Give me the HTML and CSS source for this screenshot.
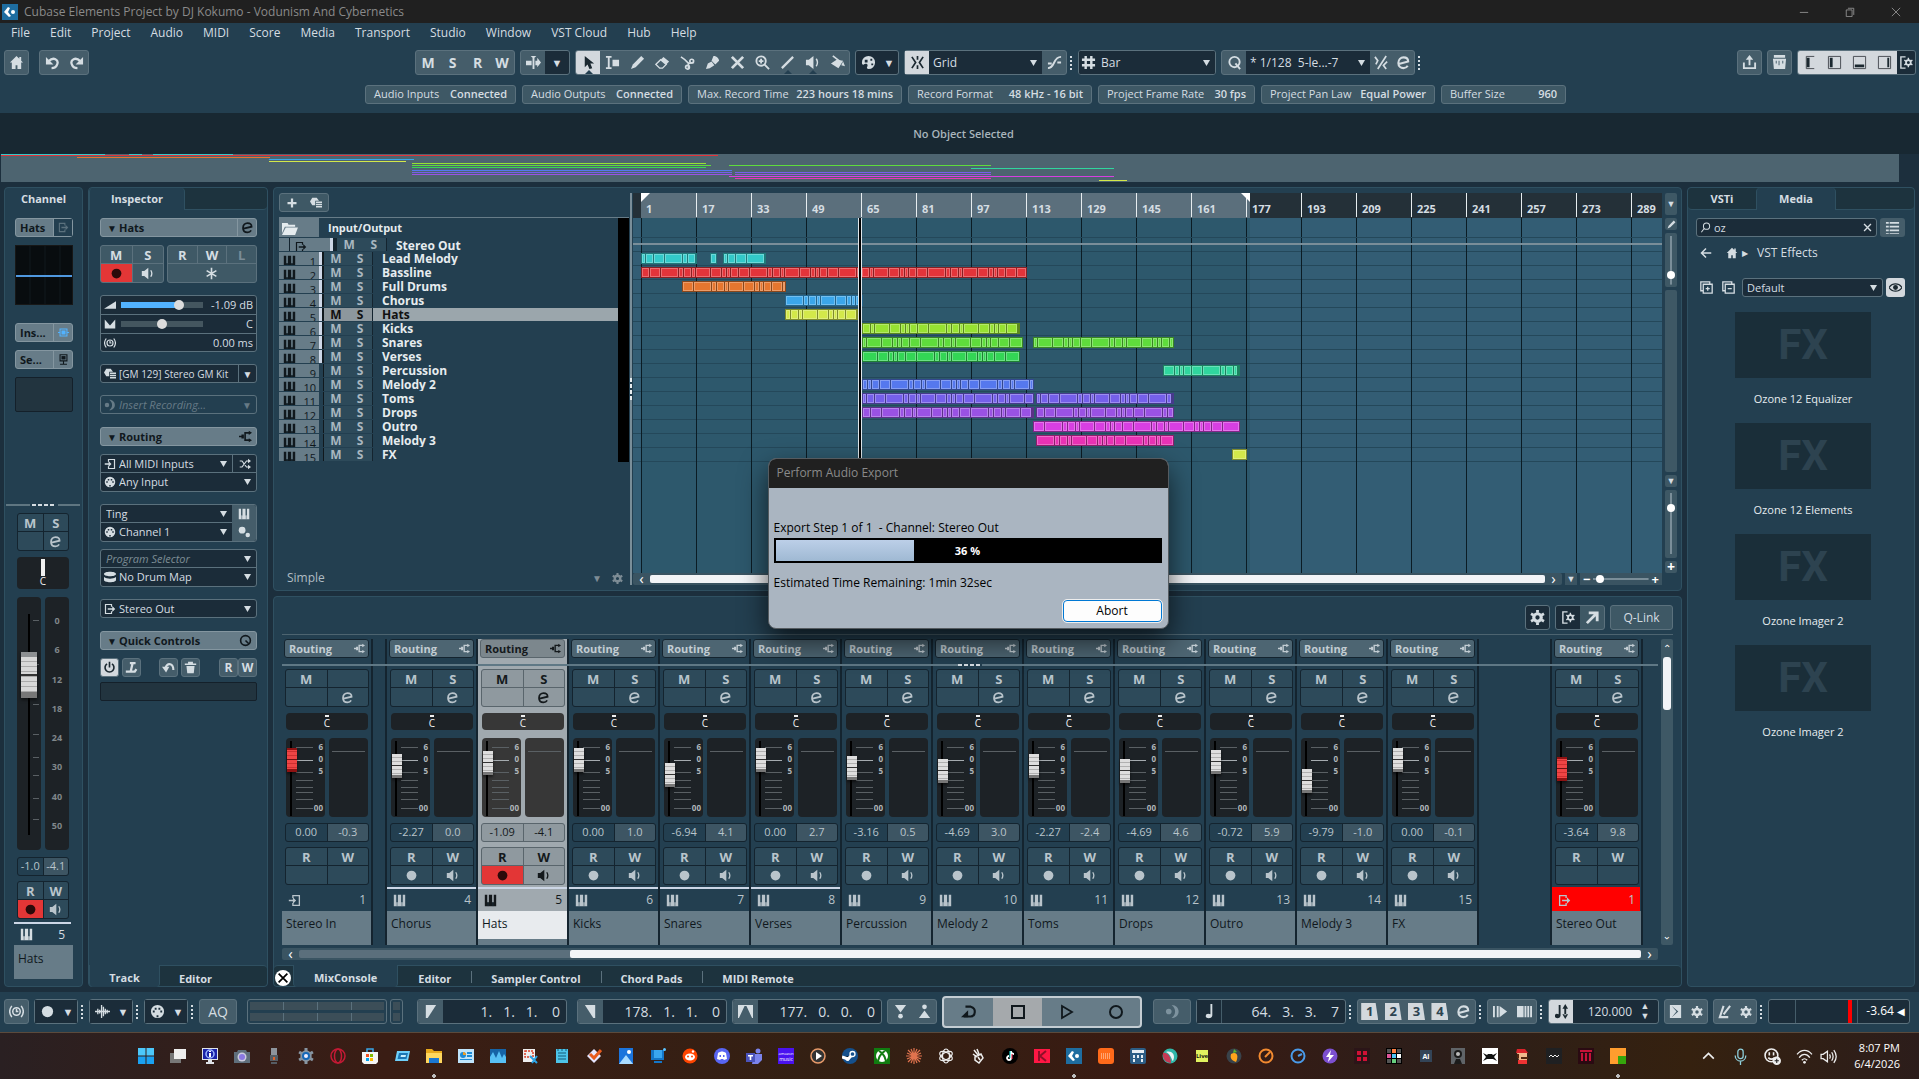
FILE: index.html
```html
<!DOCTYPE html>
<html lang="en">
<head>
<meta charset="utf-8">
<title>Cubase Elements Project by DJ Kokumo - Vodunism And Cybernetics</title>
<link rel="stylesheet" href="styles.css">
</head>
<body>
<svg class="sprite" aria-hidden="true">
  <symbol id="home" viewBox="0 0 16 16"><path fill="currentColor" d="M8 1 1 8h2v7h4v-4h2v4h4V8h2l-2-2V2h-2v2z"/></symbol>
  <symbol id="undo" viewBox="0 0 16 16"><path fill="none" stroke="currentColor" stroke-width="2.4" d="M4 6.500C9 1.500 15 5 13 10c-1 3-3 4-6 4"/><path fill="currentColor" d="M1 2v8h8z"/></symbol>
  <symbol id="redo" viewBox="0 0 16 16"><path fill="none" stroke="currentColor" stroke-width="2.400" d="M12 6.500C7 1.500 1 5 3 10c1 3 3 4 6 4"/><path fill="currentColor" d="M15 2v8H7z"/></symbol>
  <symbol id="autoscroll" viewBox="0 0 16 16"><path fill="currentColor" d="M0 6h6v5H0zM5 1h6L8 4zM7 3h2v12H7zM10 6h2V3l4 5-4 5v-2h-2z"/></symbol>
  <symbol id="arrow" viewBox="0 0 16 16"><path fill="currentColor" d="M4 1v12l3-3 2 5 3-1-2-5h4z"/></symbol>
  <symbol id="range" viewBox="0 0 16 16"><path fill="currentColor" d="M1 1h6v2H5v10h2v2H1v-2h2V3H1zM8 5h7v7H8z"/></symbol>
  <symbol id="pencil" viewBox="0 0 16 16"><path fill="currentColor" d="m12 1 3 3-9 9-5 2 2-5z"/></symbol>
  <symbol id="eraser" viewBox="0 0 16 16"><path fill="currentColor" d="m9 2 6 5-3 3-6-5z"/><path fill="none" stroke="currentColor" stroke-width="1.500" d="m6 5-5 5 4 4h3l4-4z"/></symbol>
  <symbol id="scissors" viewBox="0 0 16 16"><g fill="none" stroke="currentColor" stroke-width="1.800"><path d="M1 2c5 3 6 5 8 7M9 14V9l6-1"/><circle cx="12.500" cy="6.500" r="2"/><circle cx="8" cy="13" r="2"/></g></symbol>
  <symbol id="glue" viewBox="0 0 16 16"><path fill="currentColor" d="M9 1c4 0 6 3 6 5l-4 4-4-4zM7 7l3 4-5 3-4 1 2-6z"/></symbol>
  <symbol id="mute" viewBox="0 0 16 16"><path stroke="currentColor" stroke-width="3" d="m2 2 12 12M14 2 2 14"/></symbol>
  <symbol id="zoom" viewBox="0 0 16 16"><g fill="none" stroke="currentColor" stroke-width="2"><circle cx="6.500" cy="6.500" r="5"/><path d="m10 10 5 5M4 6.500h5M6.500 4v5"/></g></symbol>
  <symbol id="line" viewBox="0 0 16 16"><path stroke="currentColor" stroke-width="2.400" d="M14 2 2 14"/></symbol>
  <symbol id="speaker" viewBox="0 0 16 16"><path fill="currentColor" d="M1 5h3l5-4v14l-5-4H1z"/><path fill="none" stroke="currentColor" stroke-width="1.600" d="M12 4c2 3 2 5 0 8"/></symbol>
  <symbol id="bucket" viewBox="0 0 16 16"><path fill="currentColor" d="m1 9 6-4 7 1-5 8zM14 7l2 5-4-1z"/><path fill="none" stroke="currentColor" stroke-width="1.800" d="m3 1 8 6"/></symbol>
  <symbol id="palette" viewBox="0 0 16 16"><path fill="currentColor" fill-rule="evenodd" d="M8 1a7 7 0 0 0-7 7c0 2 1 3 2 2 1-1 4-1 4 1s-2 3 1 4A7 7 0 0 0 8 1zM4 5h3v3H4zm6-1h2v2h-2zm1 5h2v2h-2z"/></symbol>
  <symbol id="snap" viewBox="0 0 16 16"><path fill="none" stroke="currentColor" stroke-width="1.800" d="M8 1v4M8 11v4M2 2l4 6-4 6M14 2l-4 6 4 6"/></symbol>
  <symbol id="curve" viewBox="0 0 16 16"><path fill="none" stroke="currentColor" stroke-width="2" d="M1 14c8 0 5-12 14-12M1 9h4M11 8h4"/></symbol>
  <symbol id="hash" viewBox="0 0 16 16"><path stroke="currentColor" stroke-width="2.600" d="M5 1v14M11 1v14M1 5h14M1 11h14"/></symbol>
  <symbol id="q" viewBox="0 0 16 16"><g fill="none" stroke="currentColor" stroke-width="2"><circle cx="8" cy="7.500" r="5.500"/><path d="m9 9 5 6"/></g></symbol>
  <symbol id="iq" viewBox="0 0 16 16"><path fill="none" stroke="currentColor" stroke-width="1.800" d="M1 2l3 4-2 4M13 1 4 15M14 7l-4 4 3 4"/></symbol>
  <symbol id="e" viewBox="0 0 16 16"><path fill="none" stroke="currentColor" stroke-width="2.200" d="M3 9.500 13 7C13 4 11 2.500 8 2.500S2.500 5 2.500 8.500 5 14 8 14c2 0 3.500-.8 4.500-2.500"/></symbol>
  <symbol id="export" viewBox="0 0 16 16"><path fill="currentColor" d="m8 0 4 5H9v6H7V5H4zM1 8h2v5h10V8h2v7H1z"/></symbol>
  <symbol id="mixer" viewBox="0 0 16 16"><path fill="currentColor" fill-rule="evenodd" d="M2 0h12v3H2zM1 4h14l-1 11H2zm3 2v3h1V6zm3 0v5h1V6zm4 0v3h1V6z"/></symbol>
  <symbol id="zl" viewBox="0 0 16 16"><path fill="none" stroke="#444a50" d="M12 1.500H3.500v13H12"/><path fill="#1b2830" d="M4 3h3v10H4z"/></symbol>
  <symbol id="zi" viewBox="0 0 16 16"><path fill="none" stroke="#444a50" d="M1.500 1.500h13v13h-13z"/><path fill="#1b2830" d="M3 3h3v10H3z"/></symbol>
  <symbol id="zb" viewBox="0 0 16 16"><path fill="none" stroke="#444a50" d="M1.500 1.500h13v13h-13z"/><path fill="#1b2830" d="M3 10h10v3H3z"/></symbol>
  <symbol id="zr" viewBox="0 0 16 16"><path fill="none" stroke="#444a50" d="M1.500 1.500h13v13h-13z"/><path fill="#1b2830" d="M11 3h2v10h-2z"/></symbol>
  <symbol id="gear" viewBox="0 0 16 16"><circle cx="8" cy="8" r="4" fill="none" stroke="currentColor" stroke-width="3.400"/><path stroke="currentColor" stroke-width="3" d="M8 0v3M8 13v3M1.100 4l2.600 1.500M12.300 10.500l2.600 1.500M1.100 12l2.600-1.500M12.300 5.500 14.900 4"/></symbol>
  <symbol id="setup" viewBox="0 0 16 16"><path fill="none" stroke="currentColor" stroke-width="1.500" d="M7 2H2v12h5"/><circle cx="10" cy="8" r="2.500" fill="none" stroke="currentColor" stroke-width="1.800"/><path stroke="currentColor" stroke-width="1.500" d="M10 3v3M10 10v3M5.700 5.500l2 1.200M12.300 9.300l2 1.200M5.700 10.500l2-1.200M12.300 6.700l2-1.200"/></symbol>
  <symbol id="popout" viewBox="0 0 16 16"><path fill="none" stroke="currentColor" stroke-width="3" d="M2 14 12 4M4 3h9v9"/></symbol>
  <symbol id="out" viewBox="0 0 16 16"><path fill="none" stroke="currentColor" stroke-width="1.600" d="M10 5V2H2v12h8v-3"/><path fill="currentColor" d="M5 7h6V4l4 4-4 4V9H5z"/></symbol>
  <symbol id="in" viewBox="0 0 16 16"><path fill="none" stroke="currentColor" stroke-width="1.600" d="M6 5V2h8v12H6v-3"/><path fill="currentColor" d="M1 7h5V4l4 4-4 4V9H1z"/></symbol>
  <symbol id="tkeys" viewBox="0 0 16 16"><path fill="currentColor" d="M1 1h3v9h2V1h4v9h2V1h3v14H1z"/><path stroke="#233f50" stroke-width="1" d="M5 10v5M11 10v5" opacity=".6"/></symbol>
  <symbol id="folder" viewBox="0 0 18 16"><path fill="currentColor" d="M1 2h6l1 2h7v2H4L1 13zM5 7h13l-3 8H1z"/></symbol>
  <symbol id="plus" viewBox="0 0 16 16"><path stroke="currentColor" stroke-width="3" d="M8 2v12M2 8h12"/></symbol>
  <symbol id="preset" viewBox="0 0 16 16"><path fill="currentColor" d="M3 1h6l3 4H7v6H3L0 6zM8 6h8v2H8zM8 9h8v2H8zM8 12h8v2H8z"/></symbol>
  <symbol id="dot" viewBox="0 0 16 16"><circle cx="8" cy="8" r="6" fill="currentColor"/></symbol>
  <symbol id="star" viewBox="0 0 16 16"><path stroke="currentColor" stroke-width="2" d="M8 1v14M2 4.500l12 7M2 11.500l12-7"/></symbol>
  <symbol id="vol" viewBox="0 0 16 16"><path fill="currentColor" d="M0 13 16 3v10z"/></symbol>
  <symbol id="pan" viewBox="0 0 16 16"><path fill="currentColor" d="M1 2l7 8 7-8v12H1z"/></symbol>
  <symbol id="delay" viewBox="0 0 16 16"><g fill="none" stroke="currentColor" stroke-width="1.600"><circle cx="8" cy="8" r="4"/><path d="M8 5v3h2M3 2C0 6 0 10 3 14M13 2c3 4 3 8 0 12"/></g></symbol>
  <symbol id="insrec" viewBox="0 0 16 16"><circle cx="4" cy="8" r="3" fill="currentColor"/><path fill="currentColor" d="M7 1c10 0 10 14 0 14 5-4 5-10 0-14z"/></symbol>
  <symbol id="routing" viewBox="0 0 16 16"><path fill="none" stroke="currentColor" stroke-width="2" d="M0 8h5M13 3.500H7.500v9H13"/><path fill="currentColor" d="M12 1l4 2.500L12 6zM12 10l4 2.500-4 2.500zM3 5.500h3v5H3z"/></symbol>
  <symbol id="shuffle" viewBox="0 0 16 16"><path fill="none" stroke="currentColor" stroke-width="1.600" d="M1 4h3l6 8h4M1 12h3l6-8h4"/><path fill="currentColor" d="M12 1l4 3-4 3zM12 9l4 3-4 3z"/></symbol>
  <symbol id="midi" viewBox="0 0 16 16"><path fill="currentColor" fill-rule="evenodd" d="M8 1a7 7 0 1 0 0 14A7 7 0 0 0 8 1zM3 7h2v2H3zm2-3h2v2H5zm4 0h2v2H9zm2 3h2v2h-2zm-4 5h2v2H7z"/></symbol>
  <symbol id="dots2" viewBox="0 0 16 16"><circle cx="5.500" cy="5.500" r="4.500" fill="currentColor"/><circle cx="13" cy="12" r="3" fill="currentColor"/></symbol>
  <symbol id="drum" viewBox="0 0 16 16"><path fill="currentColor" d="M0 4c0-4 16-4 16 0s-16 4-16 0zM0 8c4 3 12 3 16 0v4c0 4-16 4-16 0z"/></symbol>
  <symbol id="knob" viewBox="0 0 16 16"><g fill="none" stroke="currentColor" stroke-width="2"><circle cx="8" cy="8" r="6"/><path d="m8 8 4 4"/></g></symbol>
  <symbol id="power" viewBox="0 0 16 16"><path fill="none" stroke="currentColor" stroke-width="2" d="M8 1v7M5 3.500a5.500 5.500 0 1 0 6 0"/></symbol>
  <symbol id="learn" viewBox="0 0 16 16"><path fill="none" stroke="currentColor" stroke-width="2.800" d="M6 2.500h7M9.500 2 7 13M1 13h11l2-3"/></symbol>
  <symbol id="back" viewBox="0 0 16 16"><path fill="none" stroke="currentColor" stroke-width="2.600" d="M4 9c3-8 10-6 10 2"/><path fill="currentColor" d="M0 7h9l-4 7z"/></symbol>
  <symbol id="trash" viewBox="0 0 16 16"><path fill="currentColor" d="M1 3h4V1h6v2h4v2H1zM3 6h10l-1 9H4z"/></symbol>
  <symbol id="insert" viewBox="0 0 16 16"><path fill="none" stroke="#52b3ff" stroke-width="1.600" d="M3 3h10v10H3zM0 8h3M13 8h3"/><path fill="#52b3ff" d="M5 5h6v6H5z"/></symbol>
  <symbol id="send" viewBox="0 0 16 16"><path fill="none" stroke="currentColor" stroke-width="1.600" d="M3 1h10v9H3zM8 10v4M3 15h10"/><path fill="currentColor" d="M5 3h6v5H5z"/></symbol>
  <symbol id="search" viewBox="0 0 16 16"><g fill="none" stroke="currentColor" stroke-width="1.500"><circle cx="9.500" cy="6" r="4.500"/><path d="M6 9.500 2 15"/></g></symbol>
  <symbol id="x" viewBox="0 0 16 16"><path stroke="currentColor" stroke-width="2" d="m3 3 10 10M13 3 3 13"/></symbol>
  <symbol id="list" viewBox="0 0 16 16"><path fill="currentColor" d="M1 2h3v2H1zM5 2h10v2H5zM1 6h3v2H1zM5 6h10v2H5zM1 10h3v2H1zM5 10h10v2H5zM1 14h3v1H1zM5 14h10v1H5z"/></symbol>
  <symbol id="larrow" viewBox="0 0 16 16"><path fill="none" stroke="currentColor" stroke-width="2" d="M15 8H3M8 2 2 8l6 6"/></symbol>
  <symbol id="box" viewBox="0 0 16 16"><path fill="none" stroke="currentColor" stroke-width="1.600" d="M4 4h11v11H4zM12 4V1H1v11h3M7 9.500h5M9.500 7v5"/></symbol>
  <symbol id="boxm" viewBox="0 0 16 16"><path fill="none" stroke="currentColor" stroke-width="1.600" d="M4 4h11v11H4zM12 4V1H1v11h3M7 9.500h5"/></symbol>
  <symbol id="eye" viewBox="0 0 16 16"><path fill="none" stroke="currentColor" stroke-width="1.600" d="M0 8c4-6 12-6 16 0-4 6-12 6-16 0z"/><circle cx="8" cy="8" r="3" fill="currentColor"/></symbol>
  <symbol id="wave" viewBox="0 0 16 16"><path stroke="currentColor" stroke-width="1.400" d="M0 8h16M3 5v6M5 6v4M7 1v14M9 3v10M11 5v6M13 6v4"/></symbol>
  <symbol id="loc-l" viewBox="0 0 16 16"><path fill="currentColor" d="M3 1h11L5 15H3z"/></symbol>
  <symbol id="loc-r" viewBox="0 0 16 16"><path fill="currentColor" d="M2 1h11v14h-2z"/></symbol>
  <symbol id="loc-lr" viewBox="0 0 16 16"><path fill="currentColor" fill-rule="evenodd" d="M0 1h16v14h-1L9 2H7L1 15H0z"/></symbol>
  <symbol id="punch-in" viewBox="0 0 16 16"><path fill="currentColor" d="M2 1h12L8 9z"/><circle cx="8" cy="13" r="2.500" fill="currentColor"/></symbol>
  <symbol id="punch-out" viewBox="0 0 16 16"><path fill="currentColor" d="M2 15h12L8 7z"/><circle cx="8" cy="3" r="2.500" fill="currentColor"/></symbol>
  <symbol id="cycle" viewBox="0 0 18 16"><path fill="none" stroke="currentColor" stroke-width="2.400" d="M5 2h6c7 2 5 11 0 11H3"/><path fill="currentColor" d="M0 14 8 6v8z"/></symbol>
  <symbol id="stop" viewBox="0 0 16 16"><path fill="none" stroke="currentColor" stroke-width="2" d="M2 2h12v12H2z"/></symbol>
  <symbol id="play" viewBox="0 0 16 16"><path fill="none" stroke="currentColor" stroke-width="1.800" d="m3 2 10 6-10 6z"/></symbol>
  <symbol id="rec" viewBox="0 0 16 16"><circle cx="8" cy="8" r="6" fill="none" stroke="currentColor" stroke-width="2"/></symbol>
  <symbol id="note" viewBox="0 0 16 16"><path fill="currentColor" d="M9 0h2v12c0 4-7 4-7 1s3-3 5-2z"/></symbol>
  <symbol id="preroll" viewBox="0 0 16 16"><path fill="currentColor" d="M0 2h2v12H0zM4 2h2v12H4zM7 2l8 6-8 6z"/></symbol>
  <symbol id="postroll" viewBox="0 0 16 16"><path fill="currentColor" d="M0 2h7v12H0zM8 2h2v12H8zM11 2h2v12h-2zM14 2h2v12h-2z"/></symbol>
  <symbol id="tempo" viewBox="0 0 16 16"><path fill="currentColor" d="M5 1h2v11c0 4-6 4-6 1s2-3 4-2zM12 0l3 5H9zM11 4h2v8h-2zM12 16l3-5H9z"/></symbol>
  <symbol id="sync" viewBox="0 0 16 16"><path fill="currentColor" fill-rule="evenodd" d="M2 1h12v14H2zm2 1 5 6-5 6 7-6z"/></symbol>
  <symbol id="click" viewBox="0 0 16 16"><path fill="none" stroke="currentColor" stroke-width="2.200" d="M7 2 3 14h9M7 11l7-9"/></symbol>
</svg>

<header class="titlebar">
  <svg class="logo" viewBox="0 0 16 16"><path fill="#1e6da0" d="M0 0h16v16H0z"/><path fill="#fff" d="M6 3l2 1-2 4 3 4-2 1-5-5z"/><circle cx="11" cy="8" r="2" fill="#fff"/></svg>
  <span>Cubase Elements Project by DJ Kokumo - Vodunism And Cybernetics</span>
  <div class="winbtns">
    <button aria-label="Minimise"><svg viewBox="0 0 12 12"><path stroke="#999" d="M1 6.500h10"/></svg></button>
    <button aria-label="Restore"><svg viewBox="0 0 12 12"><path fill="none" stroke="#999" d="M1.500 3.500h7v8h-7zM3.500 1.500h7v8"/></svg></button>
    <button aria-label="Close"><svg viewBox="0 0 12 12"><path stroke="#999" d="m1 1 10 10M11 1 1 11"/></svg></button>
  </div>
</header>

<nav class="menubar">
  <a href="#">File</a><a href="#">Edit</a><a href="#">Project</a><a href="#">Audio</a><a href="#">MIDI</a><a href="#">Score</a><a href="#">Media</a><a href="#">Transport</a><a href="#">Studio</a><a href="#">Window</a><a href="#">VST Cloud</a><a href="#">Hub</a><a href="#">Help</a>
</nav>

<div class="toolbar">
  <div class="tool-left">
    <div class="grp"><button aria-label="Home"><svg><use href="#home"/></svg></button></div>
    <div class="grp"><button aria-label="Undo"><svg><use href="#undo"/></svg></button><button aria-label="Redo"><svg><use href="#redo"/></svg></button></div>
  </div>
  <div class="grp letters"><button>M</button><button>S</button><button>R</button><button>W</button></div>
  <div class="grp"><button aria-label="Auto-scroll"><svg><use href="#autoscroll"/></svg></button><button class="dark" aria-label="Auto-scroll options">▼</button></div>
  <div class="grp">
    <button class="on notch" aria-label="Select"><svg><use href="#arrow"/></svg></button><button aria-label="Range"><svg><use href="#range"/></svg></button><button aria-label="Draw"><svg><use href="#pencil"/></svg></button><button aria-label="Erase"><svg><use href="#eraser"/></svg></button><button aria-label="Split"><svg><use href="#scissors"/></svg></button><button aria-label="Glue"><svg><use href="#glue"/></svg></button><button aria-label="Mute"><svg><use href="#mute"/></svg></button><button aria-label="Zoom"><svg><use href="#zoom"/></svg></button><button class="notch" aria-label="Line"><svg><use href="#line"/></svg></button><button class="notch" aria-label="Play tool"><svg><use href="#speaker"/></svg></button><button aria-label="Colour"><svg><use href="#bucket"/></svg></button>
  </div>
  <div class="grp"><button class="dark" aria-label="Colours"><svg><use href="#palette"/></svg></button><button class="dark slim" aria-label="Colour menu">▼</button></div>
  <div class="grp more"><button class="on" aria-label="Snap"><svg><use href="#snap"/></svg></button><select class="sel-grid" aria-label="Snap type"><option>Grid</option></select><button aria-label="Curve"><svg><use href="#curve"/></svg></button></div>
  <div class="grp dark"><button class="dark slim" aria-label="Grid type"><svg><use href="#hash"/></svg></button><select class="sel-bar" aria-label="Grid type value"><option>Bar</option></select></div>
  <div class="grp more"><button aria-label="Quantize"><svg><use href="#q"/></svg></button><select class="sel-q" aria-label="Quantize preset"><option>* 1/128&nbsp; 5-le...-7</option></select><button class="slim" aria-label="Iterative"><svg><use href="#iq"/></svg></button><button class="slim" aria-label="Quantize panel"><svg><use href="#e"/></svg></button></div>
  <div class="tool-right">
    <div class="grp"><button aria-label="Export"><svg><use href="#export"/></svg></button></div>
    <div class="grp"><button aria-label="MixConsole"><svg><use href="#mixer"/></svg></button></div>
    <div class="grp"><button class="on" aria-label="Left zone"><svg><use href="#zl"/></svg></button><button class="on" aria-label="Inspector"><svg><use href="#zi"/></svg></button><button class="on" aria-label="Lower zone"><svg><use href="#zb"/></svg></button><button class="on" aria-label="Right zone"><svg><use href="#zr"/></svg></button><button class="dark slim" aria-label="Setup"><svg><use href="#setup"/></svg></button></div>
  </div>
</div>

<div class="infoline">
  <div class="chip c1"><span>Audio Inputs</span><b>Connected</b></div>
  <div class="chip c2"><span>Audio Outputs</span><b>Connected</b></div>
  <div class="chip c3"><span>Max. Record Time</span><b>223 hours 18 mins</b></div>
  <div class="chip c4"><span>Record Format</span><b>48 kHz - 16 bit</b></div>
  <div class="chip c5"><span>Project Frame Rate</span><b>30 fps</b></div>
  <div class="chip c6"><span>Project Pan Law</span><b>Equal Power</b></div>
  <div class="chip c7"><span>Buffer Size</span><b>960</b></div>
</div>

<div class="status">No Object Selected</div>
<div class="overview" id="overview"></div>

<main class="main">
  <section class="panel channel">
    <h2>Channel</h2>
    <div class="ch-body">
      <div class="headbtn"><button class="grow">Hats</button><button class="ghost" aria-label="Output"><svg><use href="#out"/></svg></button></div>
      <div class="eq"></div>
      <div class="headbtn"><button class="grow">Ins...</button><button aria-label="Inserts"><svg><use href="#insert"/></svg></button></div>
      <div class="headbtn sends"><button class="grow">Se...</button><button aria-label="Sends"><svg><use href="#send"/></svg></button></div>
      <div class="slot"></div>
    </div>
    <div class="splitter"></div>
    <div class="ch-strip">
      <div class="cells"><button>M</button><button>S</button><button aria-label="Empty"></button><button aria-label="Edit"><svg><use href="#e"/></svg></button></div>
      <div class="bigpan"><i></i>C</div>
      <div class="bigfader">
        <div class="fbox"><div class="ticks"></div><input class="vslider" type="range" min="0" max="207" value="152" aria-label="Hats volume"></div>
        <div class="meter"><span>0</span><span>6</span><span>12</span><span>18</span><span>24</span><span>30</span><span>40</span><span>50</span></div>
      </div>
      <div class="cells vals"><span>-1.0</span><span>-4.1</span></div>
      <div class="cells"><button>R</button><button>W</button><button class="rec" aria-label="Record"><svg><use href="#dot"/></svg></button><button aria-label="Monitor"><svg><use href="#speaker"/></svg></button></div>
      <div class="ch-num"><svg><use href="#tkeys"/></svg><span>5</span></div>
      <div class="ch-name">Hats</div>
    </div>
  </section>

  <section class="panel inspector">
    <div class="tabs top"><button class="tab active">Inspector</button></div>
    <div class="insp-body">
      <div class="headbtn"><button class="grow"><i>▼</i>Hats</button><button aria-label="Edit"><svg><use href="#e"/></svg></button></div>
      <div class="insp-btns">
        <div class="cells lite"><button>M</button><button>S</button><button class="rec" aria-label="Record"><svg><use href="#dot"/></svg></button><button aria-label="Monitor"><svg><use href="#speaker"/></svg></button></div>
        <div class="cells lite three"><button>R</button><button>W</button><button class="dim">L</button><button class="wide" aria-label="Freeze"><svg><use href="#star"/></svg></button></div>
      </div>
      <div class="field values">
        <div class="row"><svg><use href="#vol"/></svg><input class="hslider vol" type="range" min="0" max="100" value="73" aria-label="Volume"><output>-1.09 dB</output></div>
        <div class="row"><svg><use href="#pan"/></svg><input class="hslider" type="range" min="0" max="100" value="50" aria-label="Pan"><output>C</output></div>
        <div class="row"><svg><use href="#delay"/></svg><output>0.00 ms</output></div>
      </div>
      <div class="field gm"><div class="row"><svg><use href="#preset"/></svg><span class="grow">[GM 129] Stereo GM Kit</span><button class="cut" aria-label="Program menu">▼</button></div></div>
      <div class="field faint"><div class="row"><svg><use href="#insrec"/></svg><em class="grow">Insert Recording...</em><button aria-label="Insert recording menu">▼</button></div></div>
      <div class="headbtn sec"><button class="grow"><i>▼</i>Routing<svg><use href="#routing"/></svg></button></div>
      <div class="field">
        <div class="row"><svg><use href="#in"/></svg><select aria-label="MIDI input"><option>All MIDI Inputs</option></select><button class="cut" aria-label="Transform"><svg><use href="#shuffle"/></svg></button></div>
        <div class="row"><svg><use href="#midi"/></svg><select aria-label="Input channel"><option>Any Input</option></select></div>
      </div>
      <div class="field inst">
        <div class="row"><select class="flush" aria-label="Instrument"><option>Ting</option></select><button class="fill" aria-label="Keyboard"><svg><use href="#tkeys"/></svg></button></div>
        <div class="row"><svg><use href="#midi"/></svg><select aria-label="MIDI channel"><option>Channel 1</option></select><button class="fill" aria-label="Output settings"><svg><use href="#dots2"/></svg></button></div>
      </div>
      <div class="field prog">
        <div class="row"><select class="flush hint" aria-label="Program"><option>Program Selector</option></select></div>
        <div class="row"><svg><use href="#drum"/></svg><select aria-label="Drum map"><option>No Drum Map</option></select></div>
      </div>
      <div class="field"><div class="row"><svg><use href="#out"/></svg><select aria-label="Output"><option>Stereo Out</option></select></div></div>
      <div class="headbtn sec"><button class="grow"><i>▼</i>Quick Controls<svg><use href="#knob"/></svg></button></div>
      <div class="qc">
        <button class="on" aria-label="Power"><svg><use href="#power"/></svg></button><button aria-label="Learn"><svg><use href="#learn"/></svg></button>
        <button class="apart" aria-label="Revert"><svg><use href="#back"/></svg></button><button aria-label="Clear"><svg><use href="#trash"/></svg></button>
        <div class="rw"><button>R</button><button>W</button></div>
      </div>
      <div class="slot"></div>
    </div>
    <div class="tabs bottom"><button class="tab active">Track</button><button class="tab">Editor</button></div>
  </section>

  <div class="center">
    <section class="panel project">
      <div class="tracks">
        <div class="addbar"><button aria-label="Add track"><svg><use href="#plus"/></svg></button><button aria-label="Track presets"><svg><use href="#preset"/></svg></button></div>
        <div class="tracklist" id="tracklist">
          <div class="trk io"><div class="hd"><svg><use href="#folder"/></svg></div><div class="nm">Input/Output</div><div class="mt"></div></div>
          <div class="trk so"><div class="hd"></div><div class="hd2"><svg><use href="#out"/></svg></div><div class="ms"><button>M</button><button>S</button></div><div class="nm">Stereo Out</div><div class="mt"></div></div>
        </div>
        <div class="simple"><span>Simple</span><small>▼</small><svg><use href="#gear"/></svg></div>
      </div>
      <div class="divider"></div>
      <div class="arrange">
        <div class="ruler" id="ruler"></div>
        <div class="grid" id="grid"></div>
        <div class="hbar"><div class="sb"><button aria-label="Scroll left">‹</button><div class="rail"><div class="thumb"></div></div><button aria-label="Scroll right">›</button></div><button class="mini" aria-label="Zoom presets">▼</button><div class="zoomer"><b>−</b><input type="range" class="zslider" min="0" max="100" value="6" aria-label="Horizontal zoom"><b>+</b></div></div>
      </div>
      <div class="vtools">
        <button class="vt1" aria-label="Ruler menu">▼</button>
        <button class="vt2" aria-label="Draw"><svg><use href="#pencil"/></svg></button>
        <div class="vz"><i></i></div>
        <div class="vscroll"></div>
        <button class="vt2" aria-label="Vertical zoom presets">▼</button>
        <div class="vz low"><i></i></div>
        <b class="vplus">+</b>
      </div>
    </section>

    <section class="panel mix">
      <div class="mixtop">
        <button class="dark" aria-label="Settings"><svg><use href="#gear"/></svg></button>
        <div class="pair"><button class="dark" aria-label="Setup layout"><svg><use href="#setup"/></svg></button><button aria-label="Open in window"><svg><use href="#popout"/></svg></button></div>
        <button class="qlink">Q-Link</button>
      </div>
      <div class="mixbody">
        <div class="mixmain">
          <div class="strips" id="strips"></div>
          <div class="sb"><button aria-label="Scroll left">‹</button><div class="rail mixrail"><div class="thumb"></div></div><button aria-label="Scroll right">›</button></div>
        </div>
        <div class="vsb"><button aria-label="Scroll up">⌃</button><div class="vthumb"></div><button class="down" aria-label="Scroll down">⌃</button></div>
      </div>
      <div class="tabs bottom lower"><button class="closer" aria-label="Close lower zone"><svg><use href="#x"/></svg></button><button class="tab active">MixConsole</button><button class="tab">Editor</button><button class="tab">Sampler Control</button><button class="tab">Chord Pads</button><button class="tab last">MIDI Remote</button></div>
    </section>
  </div>

  <section class="panel media">
    <div class="tabs top"><button class="tab">VSTi</button><button class="tab active">Media</button></div>
    <div class="media-body">
      <div class="searchrow"><label class="search"><svg><use href="#search"/></svg><input type="text" value="oz" aria-label="Search"><svg><use href="#x"/></svg></label><button aria-label="List view"><svg><use href="#list"/></svg></button></div>
      <div class="crumbs"><svg><use href="#larrow"/></svg><svg><use href="#home"/></svg><i>▶</i><a href="#">VST Effects</a></div>
      <div class="filter"><svg><use href="#box"/></svg><svg><use href="#boxm"/></svg><select aria-label="Attributes"><option>Default</option></select><button aria-label="Show"><svg><use href="#eye"/></svg></button></div>
      <figure><div class="fx">FX</div><figcaption>Ozone 12 Equalizer</figcaption></figure>
      <figure><div class="fx">FX</div><figcaption>Ozone 12 Elements</figcaption></figure>
      <figure><div class="fx">FX</div><figcaption>Ozone Imager 2</figcaption></figure>
      <figure><div class="fx">FX</div><figcaption>Ozone Imager 2</figcaption></figure>
    </div>
  </section>
</main>

<footer class="transport">
  <div class="grp"><button aria-label="Constrain delay"><svg><use href="#delay"/></svg></button></div>
  <div class="grp more dark t-menu"><button class="dark" aria-label="Record mode"><svg><use href="#dot"/></svg></button><button class="dark slim" aria-label="Record menu">▼</button></div>
  <div class="grp more dark t-menu"><button class="dark" aria-label="Audio record mode"><svg><use href="#wave"/></svg></button><button class="dark slim" aria-label="Audio menu">▼</button></div>
  <div class="grp more dark t-menu"><button class="dark" aria-label="MIDI record mode"><svg><use href="#midi"/></svg></button><button class="dark slim" aria-label="MIDI menu">▼</button></div>
  <div class="grp"><button class="aq">AQ</button></div>
  <div class="perf"><i></i><i></i></div><div class="perf tiny"><i></i><i></i></div>
  <div class="grp dark t-loc first"><button aria-label="Left locator"><svg><use href="#loc-l"/></svg></button><output>1. &nbsp; 1. &nbsp; 1. &nbsp; &nbsp;0</output></div>
  <div class="grp dark t-loc"><button aria-label="Right locator"><svg><use href="#loc-r"/></svg></button><output>178. &nbsp; 1. &nbsp; 1. &nbsp; &nbsp;0</output></div>
  <div class="grp dark t-loc near"><button aria-label="Locator range"><svg><use href="#loc-lr"/></svg></button><output>177. &nbsp; 0. &nbsp; 0. &nbsp; &nbsp;0</output></div>
  <div class="grp"><button aria-label="Punch in"><svg><use href="#punch-in"/></svg></button><button aria-label="Punch out"><svg><use href="#punch-out"/></svg></button></div>
  <div class="trans"><button aria-label="Cycle"><svg><use href="#cycle"/></svg></button><button class="lit" aria-label="Stop"><svg><use href="#stop"/></svg></button><button aria-label="Play"><svg><use href="#play"/></svg></button><button aria-label="Record"><svg><use href="#rec"/></svg></button></div>
  <div class="grp retro"><button class="faded" aria-label="Retrospective record"><svg><use href="#insrec"/></svg></button></div>
  <div class="grp dark t-loc more near"><button class="dark" aria-label="Time format"><svg><use href="#note"/></svg></button><output>64. &nbsp; 3. &nbsp; 3. &nbsp; &nbsp;7</output></div>
  <div class="grp more t-mark"><button><b>1</b></button><button><b>2</b></button><button><b>3</b></button><button><b>4</b></button><button aria-label="Markers"><svg><use href="#e"/></svg></button></div>
  <div class="grp more"><button aria-label="Preroll"><svg><use href="#preroll"/></svg></button><button aria-label="Postroll"><svg><use href="#postroll"/></svg></button></div>
  <div class="grp dark t-tempo"><button class="on" aria-label="Tempo track"><svg><use href="#tempo"/></svg></button><output>120.000</output><span class="spin"><i>▲</i><i>▼</i></span></div>
  <div class="grp near"><button class="slim" aria-label="Sync"><svg><use href="#sync"/></svg></button><button class="slim" aria-label="Sync setup"><svg class="sm"><use href="#gear"/></svg></button></div>
  <div class="grp more near"><button class="slim" aria-label="Click"><svg><use href="#click"/></svg></button><button class="slim" aria-label="Click setup"><svg class="sm"><use href="#gear"/></svg></button></div>
  <div class="grp dark t-level"><output>-3.64 <small>◀</small></output></div>
</footer>

<div class="taskbar">
  <div class="apps">
    <svg viewBox="0 0 16 16"><path fill="#4cc8fb" d="M0 0h7.500v7.500H0zM8.500 0H16v7.500H8.500z"/><path fill="#1aa1f1" d="M0 8.500h7.500V16H0zM8.500 8.500H16V16H8.500z"/></svg>
    <svg viewBox="0 0 16 16"><path fill="#777" d="M0 5h11v10H0z"/><path fill="#eee" d="M4 1h12v10H4z"/></svg>
    <svg viewBox="0 0 16 16"><path fill="#dfe3e8" d="M0 0h16v12H0zM6 12h4v2h2v2H4v-2h2z"/><path fill="#1a22a8" d="M1 1h14v10H1z"/><circle cx="8" cy="6" r="4" fill="none" stroke="#9bb5ff" stroke-width="1.500"/><path fill="#fff" d="M7 5h2v4H7zM7 3h2v1H7z"/></svg>
    <svg viewBox="0 0 16 16"><path fill="#5f6f7c" d="M0 4h3l1-2h8l1 2h3v11H0z"/><circle cx="8" cy="9" r="4.500" fill="#ccd"/><circle cx="8" cy="9" r="3" fill="#8a78e0"/></svg>
    <svg viewBox="0 0 16 16"><path fill="#8d949c" d="M5 0h6v8H5z"/><path fill="#555c63" d="M4 7h8v6H4zM5 14h6v2H5z"/><path fill="#e0632a" d="M7 9h2v3H7z"/></svg>
    <svg viewBox="0 0 16 16" color="#8795a2"><use href="#gear" width="16" height="16"/><circle cx="8" cy="8" r="4" fill="#1668b8"/><circle cx="8" cy="8" r="2" fill="#eef"/></svg>
    <svg viewBox="0 0 16 16"><circle cx="8" cy="8" r="7" fill="none" stroke="#c41a35" stroke-width="1.500"/><ellipse cx="8" cy="8" rx="3.500" ry="7" fill="none" stroke="#c41a35" stroke-width="1.500"/></svg>
    <svg viewBox="0 0 16 16"><path fill="#f4f4f4" d="M0 4h16v10l-2 2H2l-2-2z"/><path fill="none" stroke="#3aa6e8" stroke-width="1.500" d="M5 4V1h6v3"/><path fill="#f25022" d="M4 6h3v3H4z"/><path fill="#7fba00" d="M8 6h3v3H8z"/><path fill="#00a4ef" d="M4 10h3v3H4z"/><path fill="#ffb900" d="M8 10h3v3H8z"/></svg>
    <svg viewBox="0 0 16 16"><path fill="#6fd0fa" d="M3 3h13l-2 10H1z"/><path fill="#1b76b4" d="M5 5h9l-1.500 6H3.500z"/><path fill="#c6f0ff" d="M7 7h5l-.5 2h-5z"/></svg>
    <svg class="run" viewBox="0 0 16 16"><path fill="#e8a91c" d="M0 1h6l2 2h8v12H0z"/><path fill="#ffd75e" d="M0 5h16v10H0z"/><path fill="#1a77d2" d="M3 10h10v5H3z"/></svg>
    <svg viewBox="0 0 16 16"><path fill="#bfe4fb" d="M0 1h16v14H0z"/><circle cx="5" cy="7" r="3" fill="#1b8ad6"/><path fill="#1b8ad6" d="M9 4h5v2H9zM9 7h5v2H9zM2 11h12v1H2z"/><path fill="#f39c1f" d="M5 4a3 3 0 0 1 3 3H5z"/></svg>
    <svg viewBox="0 0 16 16"><path fill="#1663a6" d="M0 1h16v14H0z"/><path fill="#57c0f5" d="M0 9l3-5 3 6 3-7 3 7 2-4 2 3v6H0z"/></svg>
    <svg viewBox="0 0 16 16"><path fill="#eee" d="M1 1h12v13H1z"/><path fill="none" stroke="#d8402a" stroke-width="1.500" stroke-dasharray="2 1" d="M3 3h8v6H3z"/><path stroke="#2aa3e6" stroke-width="2" d="M8 8l7 7M15 8l-5 7"/></svg>
    <svg viewBox="0 0 16 16"><path fill="#4dc4e8" d="M2 1h12v14H2z"/><path stroke="#145b76" d="M4 5h8M4 8h8M4 11h8M4 1v2M8 1v2M12 1v2"/></svg>
    <svg viewBox="0 0 16 16"><path fill="#e6e6ff" d="M8 1l7 7-7 7-7-7z"/><path fill="none" stroke="#e85b1e" stroke-width="3" d="m4 6 4 4 7-8"/></svg>
    <svg viewBox="0 0 16 16"><path fill="#1b74dc" d="M1 0h14v16H1z"/><path fill="#a9dbff" d="M1 16 8 7l7 9z"/><circle cx="11" cy="4" r="2" fill="#fff"/></svg>
    <svg viewBox="0 0 16 16"><path fill="#1476c8" d="M1 2h13v10H1zM4 13h8v2H4z"/><path fill="#39a6f0" d="M4 2h8v8H4z"/><circle cx="14.500" cy="1.500" r="1.500" fill="#5cc4ff"/></svg>
    <svg viewBox="0 0 16 16"><circle cx="8" cy="8" r="7.500" fill="#ff4500"/><ellipse cx="8" cy="9" rx="5" ry="3.500" fill="#fff"/><circle cx="6" cy="8.500" r="1" fill="#ff4500"/><circle cx="10" cy="8.500" r="1" fill="#ff4500"/><circle cx="11" cy="3.500" r="1.200" fill="#fff"/></svg>
    <svg viewBox="0 0 16 16"><circle cx="8" cy="8" r="8" fill="#5865f2"/><path fill="#fff" d="M4 5c3-2 5-2 8 0l1 6-3 1-1-1H7l-1 1-3-1z"/><path fill="#5865f2" d="M5.500 7h1.500v2H5.500zM9 7h1.500v2H9z"/></svg>
    <svg viewBox="0 0 16 16"><circle cx="12" cy="3" r="2.500" fill="#7b83eb"/><path fill="#7b83eb" d="M8 6h8v6l-4 4H6z"/><path fill="#4b53bc" d="M0 5h9v9H0z"/><path fill="#fff" d="M2 7h5v1.500H5.300V12H3.700V8.500H2z"/></svg>
    <svg viewBox="0 0 16 16"><path fill="#4a12f0" d="M0 0h16v16H0z"/><text x="8" y="7" font-size="4" text-anchor="middle" fill="#fff" font-family="Open Sans">amazon</text><text x="8" y="13" font-size="5" text-anchor="middle" fill="#fff" font-family="Open Sans">music</text></svg>
    <svg viewBox="0 0 16 16"><circle cx="8" cy="8" r="7" fill="#333" stroke="#e79a6a" stroke-width="1.500"/><path fill="#fff" d="m6 4 6 4-6 4z"/></svg>
    <svg viewBox="0 0 16 16"><circle cx="8" cy="8" r="8" fill="#15508c"/><circle cx="10.500" cy="6" r="2.500" fill="none" stroke="#fff" stroke-width="1.300"/><path stroke="#fff" stroke-width="3" d="m0 9 6 2 3-3"/><circle cx="5.500" cy="11" r="2" fill="#fff"/></svg>
    <svg viewBox="0 0 16 16"><path fill="#107c10" d="M0 0h16v16H0z"/><circle cx="8" cy="8" r="6" fill="#fff"/><path stroke="#107c10" stroke-width="2" d="M4 13C5 9 7 6 8 5c1 1 3 4 4 8M5 3l3 2 3-2" fill="none"/></svg>
    <svg viewBox="0 0 16 16"><path stroke="#e0734e" stroke-width="1.200" d="M8 0v16M0 8h16M2 2l12 12M14 2 2 14M5 1l6 14M11 1 5 15M1 5l14 6M1 11l14-6"/></svg>
    <svg viewBox="0 0 16 16"><g fill="none" stroke="#eee" stroke-width="1.200"><ellipse cx="8" cy="8" rx="3.500" ry="7"/><ellipse cx="8" cy="8" rx="3.500" ry="7" transform="rotate(60 8 8)"/><ellipse cx="8" cy="8" rx="3.500" ry="7" transform="rotate(120 8 8)"/></g></svg>
    <svg viewBox="0 0 16 16"><path fill="none" stroke="#eee" stroke-width="1.500" d="M4 2l4 5M7 1l2 5M3 6l4 3M5 9l6-3 2 4-4 5-4-3zM8 9l2 3"/></svg>
    <svg viewBox="0 0 16 16"><circle cx="8" cy="8" r="8" fill="#000"/><path fill="none" stroke="#fff" stroke-width="1.800" d="M9 3v7a2 2 0 1 1-2-2M9 4c1 2 2 2 3 2"/><path fill="none" stroke="#25f4ee" d="M8 3v7"/><path fill="none" stroke="#fe2c55" d="M10 6v5"/></svg>
    <svg viewBox="0 0 16 16"><path fill="#ff1744" d="M0 1h16v14H0z"/><path stroke="#8f0f28" stroke-width="2" d="M5 3v10M12 3 6 8l6 5" fill="none"/></svg>
    <svg class="run" viewBox="0 0 16 16"><path fill="#1e6da0" d="M0 0h16v16H0z"/><path fill="#fff" d="M6 3l2 1-2 4 3 4-2 1-5-5z"/><circle cx="11" cy="8" r="2" fill="#fff"/></svg>
    <svg viewBox="0 0 16 16"><rect width="16" height="16" rx="3" fill="#ff6a1a"/><path stroke="#ffe0cc" stroke-dasharray="1 1" d="M3 6h10M3 8h10M3 10h10"/></svg>
    <svg viewBox="0 0 16 16"><rect width="16" height="16" rx="2" fill="#2c5d85"/><path fill="#e6edf3" d="M2 2h12v3H2zM3 7h2v3H3zM7 7h2v3H7zM11 7h2v3h-2zM3 11h2v3H3zM11 11h2v3h-2z"/></svg>
    <svg viewBox="0 0 16 16"><circle cx="8" cy="8" r="7.500" fill="#2fb6a8"/><path fill="#eef4f4" d="M4 4c6-2 10 3 7 9-1 0-2-7-7-9z"/><path fill="#c53a55" d="M1 5c4-1 8 3 8 10C4 15 0 11 1 5z"/></svg>
    <svg viewBox="0 0 16 16"><path fill="#e0f25f" d="M2 2h12v12H2z"/><text x="8" y="10" font-size="6" font-weight="700" text-anchor="middle" fill="#111" font-family="Open Sans">Live</text></svg>
    <svg viewBox="0 0 16 16"><circle cx="8" cy="8" r="7.500" fill="#39424a"/><path fill="#ffa41c" d="M5 6c6-3 8 2 5 8-5-2-6-4-5-8z"/><path fill="#5bb531" d="m7 5 1-4 3 3z"/></svg>
    <svg viewBox="0 0 16 16"><circle cx="8" cy="8" r="6.500" fill="none" stroke="#f28a30" stroke-width="2"/><path stroke="#f28a30" stroke-width="2" d="m7 9 5-5"/></svg>
    <svg viewBox="0 0 16 16"><circle cx="8" cy="8" r="6.500" fill="none" stroke="#4a9bea" stroke-width="2"/><path stroke="#4a9bea" stroke-width="2" d="m8 8 4-2"/></svg>
    <svg viewBox="0 0 16 16"><circle cx="8" cy="8" r="7.500" fill="#7c4fd0"/><path fill="#fff" d="M9 2 4 9h3l-1 5 6-7H8z"/></svg>
    <svg viewBox="0 0 16 16"><path fill="#2b1518" d="M0 0h16v16H0z"/><path fill="#d01035" d="M3 3h4v4H3zM9 3h4v4H9zM3 9h4v4H3zM9 9h4v4H9z"/></svg>
    <svg viewBox="0 0 16 16"><path fill="#000" d="M0 0h16v16H0z"/><path fill="#555" d="M1 1h4v4H1zM11 1h4v4h-4zM1 11h4v4H1zM11 11h4v4h-4z"/><path fill="#ff8044" d="M6 1h4v4H6z"/><path fill="#e0559a" d="M1 6h4v4H1z"/><path fill="#52c5f5" d="M6 6h4v4H6z"/><path fill="#fff" d="M11 6h4v4h-4z"/><path fill="#68cf7e" d="M6 11h4v4H6z"/></svg>
    <svg viewBox="0 0 16 16"><path fill="#334457" d="M2 2h12v12H2z"/><text x="8" y="11" font-size="7" font-weight="700" text-anchor="middle" fill="#fff" font-family="Open Sans">Ai</text></svg>
    <svg viewBox="0 0 16 16"><path fill="#606468" d="M1 0h14v16H1z"/><circle cx="8" cy="6" r="4" fill="#1b1b1b"/><circle cx="8" cy="6" r="2" fill="#bbb"/><path fill="#1b1b1b" d="M4 16l2-5h4l2 5z"/></svg>
    <svg viewBox="0 0 16 16"><path fill="#fff" d="M0 0h16v16H0z"/><path fill="#111" d="m1 5 4 2 1-1h4l1 1 4-2-3 4 3 4-4-2H5l-4 2 3-4z"/></svg>
    <svg viewBox="0 0 16 16"><path fill="#d9232a" d="M3 1h8l3 4H2z"/><path fill="#f0b98c" d="M3 5h10v7H5z"/><path fill="#54260f" d="M7 9h7v2H7zM3 6h2v4H3z"/><path fill="#e33" d="M4 12h9v4H4z"/></svg>
    <svg viewBox="0 0 16 16"><path fill="#1f2022" d="M0 0h16v16H0z"/><path fill="none" stroke="#eee" d="m3 9 2-2 2 2 2-2 2 2 2-2"/></svg>
    <svg viewBox="0 0 16 16"><path fill="#2a0a12" d="M0 0h16v16H0z"/><path fill="#c51238" d="M2 2h12v2H2zM3 5h2v8H3zM7 5h2v8H7zM11 5h2v8h-2z"/></svg>
    <svg class="run" viewBox="0 0 16 16"><path fill="#ff9d2e" d="M0 0h16v16H0z"/><path fill="#36a60c" d="M8 8h8v8H8z"/></svg>
  </div>
  <div class="tray">
    <svg viewBox="0 0 16 16"><path fill="none" stroke="#eee" stroke-width="1.500" d="m3 10 5-5 5 5"/></svg>
    <svg viewBox="0 0 16 16"><rect x="5.500" y="1" width="5" height="9" rx="2.500" fill="none" stroke="#8fd0dc" stroke-width="1.200"/><path fill="none" stroke="#8fd0dc" stroke-width="1.200" d="M3 7c0 7 10 7 10 0M8 13v3"/></svg>
    <svg viewBox="0 0 16 16"><circle cx="7" cy="7" r="6" fill="none" stroke="#eee" stroke-width="1.500"/><path stroke="#eee" stroke-width="1.500" fill="none" d="M5 4v3M9 4v3M4 9c2 2 4 2 6 0"/><circle cx="12" cy="12" r="4" fill="#eee"/><path stroke="#222" d="M12 10v4M10 12h4"/></svg>
    <svg viewBox="0 0 16 16"><path fill="none" stroke="#eee" stroke-width="1.300" d="M1 6c4-5 10-5 14 0M3 9c3-4 7-4 10 0M5.500 11.500c2-2 3-2 5 0"/><circle cx="8" cy="13.500" r="1.300" fill="#eee"/></svg>
    <svg viewBox="0 0 16 16"><path fill="none" stroke="#eee" stroke-width="1.200" d="M1 6h2l4-3v10l-4-3H1zM9 6c1 2 1 3 0 4M11 4c2 3 2 5 0 8M13 2c3 4 3 8 0 12"/></svg>
    <time>8:07 PM<br>6/4/2026</time>
  </div>
</div>

<div class="dialog" role="dialog" aria-label="Perform Audio Export">
  <div class="dlg-title">Perform Audio Export</div>
  <div class="dlg-body">
    <div>Export Step 1 of 1 &nbsp;- Channel: Stereo Out</div>
    <div class="progress"><div class="bar"></div><span>36 %</span></div>
    <div class="eta">Estimated Time Remaining: 1min 32sec</div>
    <button>Abort</button>
  </div>
</div>

<script src="script.js"></script>
</body>
</html>
```
FILE: styles.css
```css
* { box-sizing: border-box; }
body { margin: 0; min-height: 100vh; display: flex; flex-direction: column; background: #1c2f3d; color: #d5dde2; font: 11px/16px "Open Sans", "Noto Sans", sans-serif; overflow: hidden; }
button, input, select, output { font: inherit; color: inherit; }
button { border: 0; padding: 0; background: none; display: flex; align-items: center; justify-content: center; }
select { appearance: none; border: 0; border-radius: 0; outline: 0; padding: 0 20px 0 4px; min-width: 0; background: transparent url("data:image/svg+xml,%3Csvg xmlns='http://www.w3.org/2000/svg' width='8' height='8'%3E%3Cpath fill='%23d5dde2' d='M0 1h7L3.500 7z'/%3E%3C/svg%3E") no-repeat right 4px center; }
svg { width: 15px; height: 15px; flex: none; }
a { color: inherit; text-decoration: none; }
h2 { margin: 0; font-size: 11px; line-height: 22px; text-align: center; height: 23px; }
i { font-style: normal; }
.sprite { position: absolute; width: 0; height: 0; }
.grow { flex: 1; }

.titlebar { height: 23px; display: flex; align-items: center; gap: 6px; padding: 0 0 0 2px; background: #202020; color: #8a8a8a; font-size: 12px; }
.logo { width: 16px; height: 16px; }
.winbtns { margin-left: auto; display: flex; }
.winbtns button { width: 46px; }
.winbtns svg { width: 10px; height: 10px; }
.menubar { height: 20px; display: flex; align-items: center; gap: 20px; padding-left: 11px; background: #233f50; font-size: 12px; }

.toolbar { height: 39px; display: flex; align-items: center; gap: 5px; padding: 0 3px 0 4px; background: #233f50; }
.tool-left { display: flex; gap: 10px; width: 406px; }
.tool-right { display: flex; gap: 5px; margin-left: auto; }
.grp { position: relative; flex: none; display: flex; height: 25px; border: 1px solid #5b717d; border-radius: 3px; background: #455d6a; overflow: hidden; }
.grp > button { width: 25px; }
.grp > button:where(:first-child, :last-child) { width: 24px; }
.grp > button:where(:only-child) { width: 23px; }
.grp > button.slim { width: 18px; }
.grp > .sel-q ~ .slim { width: 22px; }
.grp .dark, .grp.dark, .grp select { background-color: #1b2c39; }
.grp .on { background: #d3d8dd; color: #1b2830; }
.grp.dark > button:first-child:not(.dark):not(.on) { background: #455d6a; }
.letters button { font-weight: 700; font-size: 14px; }
.notch { position: relative; }
.notch::after { content: ""; position: absolute; left: 9px; bottom: 0; width: 8px; height: 4px; background: #233f50; clip-path: polygon(50% 0, 100% 100%, 0 100%); }
.more { margin-right: 6px; overflow: visible; }
.more::after { content: ""; position: absolute; right: -6px; top: 5px; width: 2px; height: 14px; background: repeating-linear-gradient(#d5dde2 0 2px, transparent 2px 4px); }
.sel-grid { width: 113px; }
.sel-bar { width: 118px; }
.sel-q { width: 124px; }
.grp select { font-size: 12px; }

.infoline { height: 31px; display: flex; justify-content: center; gap: 6px; padding: 3px 0 0 12px; background: #233f50; }
.chip { height: 19px; display: flex; align-items: center; justify-content: space-between; padding: 0 8px 1px; border: 1px solid #5b717d; border-radius: 3px; background: #3e5865; white-space: nowrap; }
.chip b { font-weight: 600; }
.c1 { width: 151px; } .c2 { width: 160px; } .c3 { width: 214px; } .c4 { width: 184px; } .c5 { width: 157px; } .c6 { width: 174px; } .c7 { width: 125px; }
.status { height: 41px; display: flex; align-items: center; justify-content: center; padding-left: 8px; background: #182832; color: #a9b5bc; font-weight: 600; }
.overview { position: relative; height: 28px; margin: 0 20px 0 1px; background: #4d6470; }
.overview i { position: absolute; height: 1px; }

.main { flex: 1; display: grid; grid-template-columns: 79px 180px 1fr 228px; gap: 5px; padding: 5px 4px; }
.panel { display: flex; flex-direction: column; min-width: 0; background: #233f50; border: 1px solid #2f5061; border-radius: 4px; }
.tabs { display: flex; background: #1d333e; border-radius: 4px; }
.tab { height: 21px; font-weight: 700; color: #d5dde2; }
.tab.active { background: #233f50; border: 1px solid #2f5061; }
.top { border-bottom: 1px solid #2f5061; }
.top .active { border-width: 0 1px; border-radius: 4px 4px 0 0; margin-bottom: -1px; height: 22px; }
.bottom .tab { padding-top: 4px; }
.bottom .active { border-width: 0 1px; border-radius: 0 0 4px 4px; margin-top: -1px; height: 22px; }
.bottom { border-top: 1px solid #2f5061; height: 21px; }
.inspector .top .tab { width: 96px; }
.inspector .bottom .tab { width: 71px; }

.headbtn { display: flex; height: 19px; border: 1px solid #8496a0; border-radius: 3px; background: #677c88; color: #10181d; }
.headbtn .grow { justify-content: flex-start; padding-left: 4px; font-weight: 700; overflow: hidden; }
.headbtn button + button { width: 19px; border-left: 1px solid #8496a0; }
.headbtn svg { width: 13px; height: 13px; }
.headbtn .ghost { background: #233f50; color: #5b717d; }
.headbtn i { width: 14px; font-size: 10px; }
.slot { height: 19px; background: #22343f; border: 1px solid #14202a; border-radius: 2px; }

.ch-body { padding: 7px 9px 0 10px; display: flex; flex-direction: column; }
.ch-body .headbtn svg { width: 11px; height: 11px; }
.eq { height: 60px; margin: 8px 0 18px; border: 1px solid #171717; background: linear-gradient(#0000 29px, #4f98e0 29px 31px, #0000 31px), repeating-linear-gradient(90deg, #080c0f 0 13px, #0c1216 13px 15px); }
.sends { margin-top: 8px; }
.ch-body .slot { height: 35px; margin-top: 8px; }
.splitter { height: 2px; margin: auto 2px 0 1px; background: linear-gradient(90deg, #0000 24px, #233f50 24px 26px, #0000 26px 50px, #233f50 50px 52px, #0000 52px), repeating-linear-gradient(90deg, #d5dde2 0 4px, #233f50 4px 6px) 26px 0 / 24px 2px no-repeat, #5f7681; }
.ch-strip { padding: 7px 9px 7px; display: flex; flex-direction: column; }
.ch-strip > * { margin: 0 4px 0 3px; }

.cells { display: grid; grid-template-columns: 1fr 1fr; grid-auto-rows: 18px; grid-template-rows: 17px; gap: 1px; padding: 0; border: 1px solid #14242f; border-radius: 3px; background: #14242f; overflow: hidden; }
.cells > * { background: #2d4a5a; color: #b9c4cb; font-weight: 700; font-size: 13px; }
.cells svg { width: 13px; height: 13px; }
.cells .rec { background: #e33636; color: #2c0a0a; }
.cells.vals { height: 19px; }
.ch-strip .vals { margin-bottom: 5px; }
.cells.vals > * { font-weight: 400; font-size: 11px; text-align: center; line-height: 16px; }
.cells.vals > :first-child { background: #233f50; }
.cells.vals > :last-child { background: #3d5563; }
.cells.lite { background: #5b717d; border-color: #5b717d; }
.cells.lite > * { background: #3f5966; color: #d5dde2; }
.cells.lite .rec { background: #e33636; color: #2c0a0a; }
.cells.lite .dim { color: #7a8c97; }
.three { grid-template-columns: 1fr 1fr 1fr; }
.wide { grid-column: span 3; }

.bigpan { height: 32px; margin-top: 6px; margin-bottom: 8px; background: #1d2226; border-radius: 4px; text-align: center; color: #f0f0f0; line-height: 11px; font-size: 10px; overflow: hidden; }
.bigpan i { display: block; width: 4px; height: 17px; margin: 2px auto 0; background: #f0f0f0; }
.bigfader { display: flex; gap: 4px; height: 253px; margin-bottom: 7px; }
.fbox, .meter { position: relative; width: 24px; height: 253px; border-radius: 4px; background: #1d2226; }
.ticks { position: absolute; left: 11px; top: 17px; width: 11px; height: 221px; background: linear-gradient(90deg, #000 0 2px, #0000 2px), linear-gradient(#5a6064, #5a6064) 5px 6px / 6px 1px no-repeat, linear-gradient(#5a6064, #5a6064) 5px 50px / 6px 1px no-repeat, linear-gradient(#5a6064, #5a6064) 5px 90px / 6px 1px no-repeat, linear-gradient(#5a6064, #5a6064) 5px 120px / 6px 1px no-repeat, linear-gradient(#5a6064, #5a6064) 5px 143px / 6px 1px no-repeat, linear-gradient(#5a6064, #5a6064) 5px 161px / 6px 1px no-repeat, linear-gradient(#5a6064, #5a6064) 5px 184px / 6px 1px no-repeat, linear-gradient(#5a6064, #5a6064) 5px 205px / 6px 1px no-repeat; }
.vslider { position: absolute; left: 4px; top: 0; width: 16px; height: 253px; margin: 0; appearance: none; background: none; writing-mode: vertical-lr; direction: rtl; }
.vslider::-webkit-slider-thumb { appearance: none; width: 16px; height: 46px; border: 0; background: linear-gradient(#8d9092 0 5px, #0000 5px 40px, #777 40px), linear-gradient(#0000 22px, #333 22px 24px, #0000 24px), repeating-linear-gradient(#d8d8d8 0 4px, #aaa 4px 5px); box-shadow: 0 2px 3px #0008; }
.meter { display: flex; flex-direction: column; justify-content: space-between; padding: 16px 0 17px; text-align: center; font-size: 9px; font-weight: 700; line-height: 15px; color: #80878b; }
.ch-num { display: flex; justify-content: space-between; align-items: center; height: 23px; margin-top: 3px; border-top: 2px solid #ccd6e6; padding: 0 6px; font-size: 12px; }
.ch-strip .ch-num { margin: 3px 2px 0 0; }
.ch-strip .ch-name { margin: 0; }
.ch-num svg { width: 13px; height: 13px; }
.ch-name { height: 34px; padding: 6px 4px; background: #677c88; color: #10181d; font-size: 12px; }

.insp-body { flex: 1; padding: 8px 10px 0 11px; }
.insp-btns { display: flex; gap: 3px; margin: 8px 0 12px; }
.insp-btns .cells { width: 64px; }
.insp-btns .three { width: 90px; }
.field { margin-bottom: 12px; border: 1px solid #5b717d; border-radius: 3px; background: #1b2c39; overflow: hidden; }
.row { display: flex; align-items: center; height: 17px; padding-left: 3px; }
.row + .row { border-top: 1px solid #5b717d; height: 19px; }
.values .row, .values .row:last-child { height: 18px; }
.values .row:nth-child(2) { height: 19px; }
.row > svg { width: 12px; height: 12px; margin-right: 3px; }
.row select { flex: 1; padding-left: 0; height: 17px; }
.row .flush { padding-left: 2px; }
.row .hint { font-style: italic; color: #7d8c95; }
.row output { flex: 1; text-align: right; padding-right: 3px; white-space: nowrap; }
.row button { width: 24px; height: 19px; font-size: 10px; flex: none; }
.row button svg { width: 12px; height: 12px; }
.row button.cut { width: 24px; border-left: 1px solid #5b717d; }
.gm .row button.cut { width: 18px; }
.row button.fill { background: #455d6a; }
.row .grow { white-space: nowrap; }
.gm .row .grow { font-size: 10px; }
.row button:not(.cut):not(.fill) { width: 18px; }
.faint { background: #233f50; color: #667a86; margin-bottom: 13px; }
.sec { margin: 0 0 8px; }
.sec svg { margin: 0 4px 0 auto; }
.inst { margin-bottom: 7px; }
.prog + .field { margin-bottom: 13px; }
.hslider { appearance: none; width: 82px; height: 12px; margin: 0 0 0 2px; background: linear-gradient(#44565f, #44565f) center / 100% 6px no-repeat; }
.hslider.vol { background: linear-gradient(90deg, #52b3ff 0 71%, #44565f 71%) center / 100% 6px no-repeat; }
.hslider::-webkit-slider-thumb { appearance: none; width: 10px; height: 10px; border-radius: 50%; background: #dcdcdc; }
.qc { display: flex; gap: 3px; margin-bottom: 5px; }
.qc button { width: 19px; height: 19px; border: 1px solid #5b717d; border-radius: 3px; background: #455d6a; font-weight: 700; font-size: 12px; }
.qc svg { width: 13px; height: 13px; }
.qc .on { background: #d3d8dd; color: #1b2830; }
.qc .apart { margin-left: 15px; }
.rw { display: flex; margin-left: auto; }

.center { display: grid; grid-template-rows: 404px 1fr; gap: 5px; min-width: 0; }
.project { flex-direction: row; padding: 5px 4px 5px 5px; }
.tracks { width: 350px; display: flex; flex-direction: column; }
.addbar { display: flex; width: 50px; height: 19px; border: 1px solid #5b717d; border-radius: 3px; background: #3e5865; }
.addbar button { flex: 1; }
.addbar svg { width: 12px; height: 12px; }
.tracklist { margin-top: 5px; border-top: 1px solid #677c88; }
.trk { display: grid; grid-template-columns: 40px 5px 49px 1fr 11px; height: 14px; overflow: hidden; font-size: 12px; }
.trk > * { height: 13px; overflow: hidden; }
.trk .hd { display: flex; justify-content: space-between; background: #677c88; color: #10181d; padding: 0 3px 0 4px; }
.trk .hd svg { width: 13px; height: 13px; margin-top: 3px; }
.trk .hd span { font-size: 11px; line-height: 20px; }
.trk .cl { border-right: 1px solid #10181d; }
.trk .cl.lit { background: linear-gradient(90deg, #ccd6e6 3px, #10181d 3px); }
.trk .ms { display: flex; background: #2d4a5a; border-right: 1px solid #14242f; color: #a9b7c0; }
.trk .ms button { flex: 1; font-weight: 700; font-size: 12px; line-height: 13px; }
.trk .nm { padding-left: 9px; font-weight: 700; line-height: 14px; color: #e6ecef; }
.trk .mt { height: 14px; background: #000; }
.trk.sel .ms { background: #8d979d; color: #111; }
.trk.sel .nm { background: #9ba6ac; color: #111; }
.trk.io { grid-template-columns: 40px 1fr 11px; height: 20px; font-size: 11px; }
.trk.io .hd, .trk.io .nm { height: 19px; line-height: 19px; }
.trk.io .hd { padding-left: 2px; }
.trk.io .hd svg { width: 17px; height: 15px; color: #e6ecef; }
.trk.io .mt { height: 20px; }
.trk.so { grid-template-columns: 10px 48px 50px 1fr 11px; }
.trk.so .nm { line-height: 16px; }
.hd2 { background: linear-gradient(90deg, #14242f 1px, #677c88 1px 41px, #ccd6e6 41px 44px, #14242f 44px); color: #10181d; padding: 3px 0 0 6px; }
.hd2 svg { width: 12px; height: 12px; }
.simple { margin-top: auto; display: flex; align-items: center; gap: 10px; padding: 0 6px 0 8px; color: #b0bcc3; font-size: 12px; line-height: 14px; }
.simple small { margin-left: auto; font-size: 10px; color: #7d8c95; }
.simple svg { width: 11px; height: 11px; color: #7d8c95; }
.divider { width: 2px; margin: 0 1px; background: linear-gradient(#0000 185px, #e6ecef 185px 189px, #233f50 189px 191px, #e6ecef 191px 195px, #233f50 195px 197px, #e6ecef 197px 201px, #233f50 201px 203px, #e6ecef 203px 207px, #0000 207px), #7a8e99; }
.arrange { flex: 1; min-width: 0; display: flex; flex-direction: column; overflow: hidden; }
.ruler { position: relative; height: 25px; background: linear-gradient(90deg, #243038 8px, #5b6f7c 8px 617px, #243038 617px); overflow: hidden; }
.ruler span { position: absolute; top: 0; height: 24px; padding: 8px 0 0 5px; border-left: 1px solid #e6ecef; font-weight: 700; line-height: 16px; }
.ruler span:first-child { border-left: 0; }
.ruler i { position: absolute; top: 0; width: 9px; height: 9px; background: #fff; clip-path: polygon(0 0, 100% 0, 0 100%); left: 8px; }
.ruler i.end { left: 608px; clip-path: polygon(0 0, 100% 0, 100% 100%); }
.grid { position: relative; flex: 1; overflow: hidden; background: linear-gradient(#7a8e99, #7a8e99) 0 25px / 100% 2px no-repeat, linear-gradient(#24485a, #24485a) 0 19px / 100% 1px no-repeat, repeating-linear-gradient(90deg, #0b1c24 0 1px, #0000 1px 55px) 8px 0 / 1100px 100% no-repeat, repeating-linear-gradient(#24485a 0 1px, #0000 1px 14px) 0 33px / 100% 211px no-repeat, linear-gradient(90deg, #335d74 8px, #2d586c 8px 617px, #335d74 617px); }
.clip { position: absolute; height: 11px; display: flex; padding: 0 1px; gap: 1px; background: color-mix(in srgb, var(--c) 60%, #000); border: solid color-mix(in srgb, var(--c) 60%, #000); border-width: 1px 0; }
.clip b { flex-shrink: 1; min-width: 1px; background: var(--c); border: 1px solid color-mix(in srgb, var(--c) 72%, #fff); }
.playhead { position: absolute; left: 225px; top: 0; width: 4px; height: 100%; background: #000; border: solid #dfe6ea; border-width: 0 1px; }
.hbar { display: flex; height: 12px; gap: 3px; background: #233f50; }
.sb { flex: 1; display: flex; align-items: center; height: 12px; background: #3a5462; border-radius: 2px; }
.sb button { width: 17px; font-size: 15px; line-height: 10px; padding-bottom: 2px; color: #fff; }
.rail { flex: 1; height: 8px; border-radius: 2px; background: #5b6f7c; }
.thumb { height: 8px; border-radius: 2px; background: #f2f4f7; }
.mini { width: 12px; font-size: 9px; background: #3a5462; }
.zoomer { display: flex; align-items: center; width: 82px; padding: 0 3px; background: #3a5462; color: #fff; font-size: 13px; line-height: 10px; }
.zslider { appearance: none; flex: 1; min-width: 0; height: 8px; margin: 0 3px; background: linear-gradient(#7a8e99, #7a8e99) center / 100% 2px no-repeat; }
.zslider::-webkit-slider-thumb { appearance: none; width: 8px; height: 8px; border-radius: 50%; background: #fff; }
.vtools { width: 12px; margin-left: 3px; display: flex; flex-direction: column; gap: 3px; padding-bottom: 12px; }
.vtools > * { background: #3e5865; border-radius: 2px; font-size: 9px; }
.vt1 { height: 22px; }
.vt2 { height: 12px; }
.vt2 svg { width: 9px; height: 9px; }
.vz { height: 54px; display: flex; flex-direction: column; align-items: center; background: linear-gradient(#7a8e99, #7a8e99) center / 2px 90% no-repeat, #3e5865; }
.vz i { width: 8px; height: 8px; border-radius: 50%; background: #fff; margin-top: 38px; }
.vz.low i { margin-top: 14px; }
.vz.low { height: 68px; }
.vscroll { flex: 1; }
.vtools .vplus { height: 12px; text-align: center; color: #fff; font-size: 14px; line-height: 11px; }

.mixtop { height: 38px; display: flex; justify-content: flex-end; align-items: center; gap: 5px; margin: 0 8px; border-bottom: 1px solid #4d6470; padding-top: 4px; }
.mixtop > * { height: 25px; border: 1px solid #5b717d; border-radius: 3px; background: #3e5865; }
.mixtop button { width: 24px; height: 100%; }
.mixtop > button { width: 25px; height: 25px; }
.mixtop .dark { background: #1b2c39; }
.pair { display: flex; overflow: hidden; }
.mixtop .qlink { width: 63px; font-size: 12px; }
.mixbody { display: flex; gap: 3px; padding: 4px 8px 0; height: 325px; }
.mixmain { flex: 1; min-width: 0; }
.strips { position: relative; display: flex; height: 306px; margin-bottom: 3px; overflow: hidden; }
.strips::after { content: ""; position: absolute; left: 0; right: 0; top: 25px; height: 2px; background: repeating-linear-gradient(90deg, #d5dde2 0 4px, #233f50 4px 6px) center / 24px 2px no-repeat, #5f7885; }
.strip { flex: none; width: 91px; border-right: 2px solid #14242f; }
.strip .route { width: 85px; height: 19px; margin: 0 0 11px 2px; padding: 0 3px 0 4px; justify-content: space-between; border: 1px solid #14242f; border-radius: 3px; background: #4d6572; color: #c3cdd3; font-weight: 700; }
.strip .route svg { width: 11px; height: 11px; }
.strip.gapafter { margin-right: 12px; }
.strip.lborder { border-left: 2px solid #14242f; width: 93px; }
.strip .cells { margin: 0 3px; width: 84px; }
.strip .minipan { height: 17px; width: 82px; margin: 6px 4px 8px; padding-top: 2px; background: #1d2226; border-radius: 4px; color: #f0f0f0; text-align: center; }
.minipan i { display: block; height: 2px; width: 4px; margin: 0 auto; background: #f0f0f0; }
.minipan span { display: block; font-size: 10px; line-height: 12px; }
.fm { display: flex; gap: 4px; margin: 0 4px 6px; width: 82px; }
.fm .fbox { width: 39px; height: 79px; }
.fm .lvl { width: 39px; height: 79px; border-radius: 4px; background: linear-gradient(#5a6064, #5a6064) 3px 13px / 33px 1px no-repeat, #1d2226; }
.scale { position: absolute; inset: 0; background: linear-gradient(#000, #000) 4px 3px / 2px 75px no-repeat, linear-gradient(#5a6064, #5a6064) 10px 9px / 17px 1px no-repeat, linear-gradient(#a5abaf, #a5abaf) 10px 22px / 17px 1px no-repeat, linear-gradient(#5a6064, #5a6064) 10px 34px / 17px 1px no-repeat, linear-gradient(#5a6064, #5a6064) 10px 42px / 17px 1px no-repeat, linear-gradient(#5a6064, #5a6064) 10px 49px / 17px 1px no-repeat, linear-gradient(#5a6064, #5a6064) 10px 54px / 17px 1px no-repeat, linear-gradient(#5a6064, #5a6064) 10px 61px / 17px 1px no-repeat, linear-gradient(#5a6064, #5a6064) 10px 70px / 17px 1px no-repeat; display: flex; flex-direction: column; align-items: flex-end; padding: 3px 2px 0 0; font-size: 8px; font-weight: 700; line-height: 12px; color: #b0b6ba; }
.scale span:last-child { margin-top: auto; padding-bottom: 3px; }
.fm .vslider { left: 1px; top: 2px; width: 10px; height: 75px; }
.fm .vslider::-webkit-slider-thumb { width: 10px; height: 24px; background: linear-gradient(#0000 21px, #777 21px), linear-gradient(#0000 11px, #333 11px 12px, #0000 12px), repeating-linear-gradient(#dedede 0 3px, #b0b0b0 3px 4px); }
.strip.red .vslider::-webkit-slider-thumb { background: linear-gradient(#8e1212 0 2px, #0000 2px 21px, #8e1212 21px), linear-gradient(#0000 11px, #701010 11px 12px, #0000 12px), repeating-linear-gradient(#ef4545 0 3px, #cf3030 3px 4px); }
.strip .vals { margin-bottom: 5px; }
.strip .num { display: flex; justify-content: space-between; align-items: center; height: 24px; margin-top: 2px; padding: 0 5px 0 6px; border-top: 2px solid transparent; font-size: 12px; color: #b9c4cb; }
.strip .num.lit { border-top-color: #ccd6e6; }
.strip .num svg { width: 13px; height: 13px; }
.strip .name { height: 34px; padding: 5px 4px; background: #677c88; color: #10181d; font-size: 12px; }
.strip.sel { background: #a0a9af; }
.strip.sel .cells { background: #59656c; border-color: #59656c; }
.strip.sel .cells > * { background: #8f999f; color: #14191c; }
.strip.sel .cells .rec { background: #e33636; color: #2c0a0a; }
.strip.sel .route { background: #7c878d; color: #14191c; border-color: #59656c; }
.strip.sel .fbox, .strip.sel .lvl, .strip.sel .minipan { background-color: #373737; }
.strip.sel .num { color: #14191c; }
.strip.sel .name { background: linear-gradient(#e8ebee 28px, #677c88 28px); }
.strip.red.out .num { background: #f00; color: #b9c4cb; margin-right: 1px; }
.strip.out { margin-left: 71px; }
.mixrail .thumb { margin-left: 271px; }
.vsb { width: 12px; display: flex; flex-direction: column; background: #3e5865; border-radius: 2px; height: 306px; }
.vsb button { height: 17px; font-size: 10px; color: #fff; }
.vthumb { height: 53px; margin: 1px 2px; border-radius: 3px; background: #f2f4f7; }
.vsb .down { margin-top: auto; transform: rotate(180deg); }
.lower { margin-top: auto; }
.lower .tab { padding: 4px 20px 0; }
.lower .tab:not(.active) + .tab { position: relative; }
.lower .tab:not(.active) + .tab::before { content: ""; position: absolute; left: 0; top: 5px; width: 1px; height: 12px; background: #5b717d; }
.closer { width: 16px; height: 16px; margin: 4px 2px 0 1px; border-radius: 50%; background: #fff; color: #000; }
.closer svg { width: 14px; height: 14px; }

.media .tab { width: 68px; }
.media .tab.active { width: 80px; }
.media-body { padding: 8px 9px 0 8px; }
.searchrow { display: flex; gap: 3px; }
.search { flex: 1; display: flex; align-items: center; height: 19px; padding: 0 3px; border: 1px solid #5b717d; border-radius: 3px; background: #1b2c39; }
.search input { flex: 1; min-width: 0; border: 0; outline: 0; background: none; padding: 0 3px; }
.search svg { width: 11px; height: 11px; }
.searchrow button { width: 25px; height: 19px; border-radius: 3px; background: #455d6a; }
.crumbs { display: flex; align-items: center; gap: 7px; padding: 2px 0 0 4px; height: 30px; font-size: 12px; }
.crumbs svg { width: 12px; height: 12px; }
.crumbs svg + svg { margin-left: 7px; }
.crumbs i { margin: 0 2px 0 -3px; font-size: 8px; }
.filter { display: flex; align-items: center; gap: 9px; height: 19px; margin: 11px 0 15px; padding-left: 4px; }
.filter svg { width: 13px; height: 13px; }
.filter select { flex: 1; height: 19px; margin-left: -2px; border: 1px solid #5b717d; border-radius: 3px; background-color: #1b2c39; }
.filter button { width: 19px; height: 19px; margin-left: -6px; border-radius: 3px; background: #d3d8dd; color: #1b2830; }
figure { width: 136px; height: 111px; margin: 0 0 0 39px; text-align: center; }
.fx { height: 66px; background: #1a2e39; color: #2d4350; font: 700 42px/66px Roboto, sans-serif; }
figcaption { padding-top: 13px; color: #e6ecef; margin: 0 -10px; }

.transport { height: 40px; display: flex; align-items: center; gap: 5px; padding: 0 3px 1px 4px; background: #233f50; }
.transport .sm { width: 12px; height: 12px; }
.t-menu { width: 44px; }
.grp > button.aq { width: 36px; font-size: 14px; }
.perf { width: 140px; height: 25px; margin-left: 5px; display: flex; flex-direction: column; gap: 3px; padding: 2px; border: 1px solid #5b717d; border-radius: 3px; }
.perf i { flex: 1; background: repeating-linear-gradient(90deg, #3c4e58 0 33px, #5b717d 33px 34px); }
.perf.tiny { width: 13px; margin-left: -2px; }
.t-loc { width: 150px; margin-left: 5px; }
.t-loc.first { margin-left: 9px; }
.t-loc.near { margin-left: 0; }
.t-loc output { flex: 1; text-align: right; padding-right: 6px; font-size: 14px; line-height: 23px; border-left: 1px solid #455d6a; white-space: nowrap; }
.trans { display: flex; width: 200px; height: 32px; border: 2px solid #c4cdd3; border-radius: 4px; background: #677c88; color: #10181d; }
.trans button { flex: 1; }
.trans .lit { background: #a5a9ac; }
.trans svg { width: 16px; height: 16px; }
.transport .trans + .retro { margin-left: 6px; }
.grp.retro > .faded { width: 36px; color: #7d929e; }
.t-mark { width: 119px; }
.grp.t-mark > button { flex: 1; width: auto; }
.t-mark b { width: 17px; height: 17px; background: #d3d8dd; color: #2d4350; font-size: 13px; line-height: 17px; clip-path: polygon(0 0, 85% 0, 100% 100%, 0 100%); }
.t-tempo { width: 111px; }
.t-tempo output { flex: 1; text-align: right; font-size: 12px; line-height: 23px; }
.spin { width: 26px; font-size: 9px; text-align: center; line-height: 10px; padding-top: 1px; }
.spin i { display: block; }
.grp.near > .slim { width: 21px; }
.grp.t-level { width: 142px; background: linear-gradient(90deg, #0000 26px, #455d6a 26px 27px, #0000 27px 79px, #f00 79px 83px, #0000 83px 88px, #455d6a 88px 89px, #0000 89px), #1b2c39; }
.t-level output { margin-left: auto; padding-right: 4px; line-height: 22px; font-size: 12px; color: #fff; white-space: nowrap; }

.taskbar { height: 47px; display: flex; justify-content: space-between; padding: 0 19px 0 130px; border-top: 1px solid #5b4a3c; background: linear-gradient(90deg, #2a2022, #3a1d14 20%, #332013 45%, #3a1a12 60%, #2c1e1a 75%, #35210f 88%, #2c1d1b); }
.apps { display: flex; align-items: center; }
.apps svg { width: 32px; height: 46px; padding: 15px 8px; }
.apps .run { background: radial-gradient(circle, #bbb 2px, #0000 2px) 13px 40px / 6px 6px no-repeat; }
.tray { display: flex; align-items: center; gap: 15px; color: #fff; }
.tray svg { width: 17px; height: 17px; }
.tray svg:nth-of-type(5) { margin-left: -8px; }
.tray time { text-align: right; margin-left: 2px; }

.dialog { position: absolute; left: calc(50% - 192px); top: 458px; width: 401px; border: 1px solid #555b60; border-radius: 8px; overflow: hidden; background: #aab5c1; color: #000; font-size: 12px; box-shadow: 0 12px 28px #000a; }
.dlg-title { height: 29px; padding: 6px 8px; background: #202020; color: #8a8a8a; }
.dlg-body { padding: 32px 5px 6px; }
.progress { position: relative; height: 25px; margin: 2px 1px 12px 0; padding: 2px; background: #000; color: #fff; text-align: center; }
.progress .bar { height: 21px; width: 36%; background: linear-gradient(#bccfe8, #9fb9d3); }
.progress span { position: absolute; inset: 0; line-height: 25px; font-weight: 700; font-size: 11px; }
.dlg-body button { width: 99px; height: 22px; margin: 9px 1px 0 auto; border: 1px solid #0078d4; border-radius: 4px; background: #fdfdfd; outline: 1px solid #eee; }
```
FILE: script.js
```js
const icon = name => `<svg><use href="#${name}"/></svg>`;

// Arrangement data: name, colour, list of [start, end] clip positions on the timeline
const tracks = [
  ['Lead Melody', '#33c9c9', [[8, 64], [77, 84], [90, 133]]],
  ['Bassline', '#e3343a', [[8, 394]]],
  ['Full Drums', '#e5762f', [[49, 153]]],
  ['Chorus', '#3ba6ea', [[152, 230]]],
  ['Hats', '#d3e84a', [[152, 226]]],
  ['Kicks', '#97e232', [[229, 387]]],
  ['Snares', '#5fdc3c', [[229, 390], [400, 541]]],
  ['Verses', '#33d655', [[229, 387]]],
  ['Percussion', '#30d69e', [[530, 607]]],
  ['Melody 2', '#5578ee', [[229, 401]]],
  ['Toms', '#7560ea', [[229, 401], [403, 541]]],
  ['Drops', '#9a52e4', [[229, 401], [403, 541]]],
  ['Outro', '#d83fe2', [[400, 607]]],
  ['Melody 3', '#ea33b6', [[403, 541]]],
  ['FX', '#d3e84a', [[599, 614]]]
];
const parts = [3, 7, 10, 17, 4, 7, 3, 14, 10, 4];

document.getElementById('tracklist').insertAdjacentHTML('beforeend', tracks.map(([name], i) => `
  <div class="trk${name === 'Hats' ? ' sel' : ''}"><div class="hd">${icon('tkeys')}<span>${i + 1}</span></div>
  <div class="cl${i < 8 ? ' lit' : ''}"></div><div class="ms"><button>M</button><button>S</button></div>
  <div class="nm">${name}</div><div class="mt"></div></div>`).join(''));

let ruler = '';
for (let k = 0; k < 19; k++) ruler += `<span style="left:${8 + k * 55}px">${1 + k * 16}</span>`;
document.getElementById('ruler').innerHTML = ruler + '<i></i><i class="end"></i>';

// Splits a clip into consecutive parts; short clips stay whole
const split = (width, seed) => {
  if (width < 16) return `<b style="width:${width - 2}px"></b>`;
  let html = '', used = 0;
  for (let k = seed; used < width - 3; k++) {
    const w = Math.min(parts[k % parts.length], width - used - 2);
    html += `<b style="width:${w}px"></b>`;
    used += w + 1;
  }
  return html;
};
document.getElementById('grid').innerHTML = tracks.map(([, color, clips], row) =>
  clips.map(([a, b]) => `<div class="clip" style="--c:${color};left:${a}px;width:${b - a}px;top:${35 + row * 14}px">${split(b - a, row)}</div>`).join('')
).join('') + '<div class="playhead"></div>';

const rows = [0, 1, 3, 5, 7, 9, 11, 13, 14, 16, 18, 20, 22, 24, 26];
document.getElementById('overview').innerHTML = tracks.map(([, color, clips], row) =>
  clips.map(([a, b]) => `<i style="left:${Math.round((a - 8) * 1.858)}px;width:${Math.round((b - a) * 1.858)}px;top:${rows[row]}px;background:${color}"></i>`).join('')
).join('');

// Mixer: name, number, level, peak, fader position, kind
const strips = [
  ['Stereo In', 1, '0.00', '-0.3', 43, 'red gapafter io'],
  ['Chorus', 4, '-2.27', '0.0', 37, 'lborder lit'],
  ['Hats', 5, '-1.09', '-4.1', 40, 'sel lit'],
  ['Kicks', 6, '0.00', '1.0', 43, 'lit'],
  ['Snares', 7, '-6.94', '4.1', 28, 'lit'],
  ['Verses', 8, '0.00', '2.7', 43, 'lit'],
  ['Percussion', 9, '-3.16', '0.5', 35, ''],
  ['Melody 2', 10, '-4.69', '3.0', 32, ''],
  ['Toms', 11, '-2.27', '-2.4', 37, ''],
  ['Drops', 12, '-4.69', '4.6', 32, ''],
  ['Outro', 13, '-0.72', '5.9', 41, ''],
  ['Melody 3', 14, '-9.79', '-1.0', 22, ''],
  ['FX', 15, '0.00', '-0.1', 43, ''],
  ['Stereo Out', 1, '-3.64', '9.8', 34, 'red out lborder io']
];
document.getElementById('strips').innerHTML = strips.map(([name, num, level, peak, pos, kind]) => {
  const io = kind.includes('io');
  const sel = kind.includes('sel');
  const rec = io ? '<span></span><span></span>' : `<button class="${sel ? 'rec' : ''}" aria-label="Record">${icon('dot')}</button><button aria-label="Monitor">${icon('speaker')}</button>`;
  return `<div class="strip ${kind.replace('lit', '')}">
    <button class="route">Routing${icon('routing')}</button>
    <div class="cells"><button>M</button><button>${name === 'Stereo In' ? '' : 'S'}</button><span></span><button aria-label="Edit">${icon('e')}</button></div>
    <div class="minipan"><i></i><span>C</span></div>
    <div class="fm"><div class="fbox"><div class="scale"><span>6</span><span>0</span><span>5</span><span>00</span></div>
      <input class="vslider" type="range" min="0" max="51" value="${pos}" aria-label="${name} volume"></div><div class="lvl"></div></div>
    <div class="cells vals"><span>${level}</span><span>${peak}</span></div>
    <div class="cells"><button>R</button><button>W</button>${rec}</div>
    <div class="num${kind.includes('lit') ? ' lit' : ''}">${icon(name === 'Stereo In' ? 'in' : name === 'Stereo Out' ? 'out' : 'tkeys')}<span>${num}</span></div>
    <div class="name">${name}</div></div>`;
}).join('');
```
